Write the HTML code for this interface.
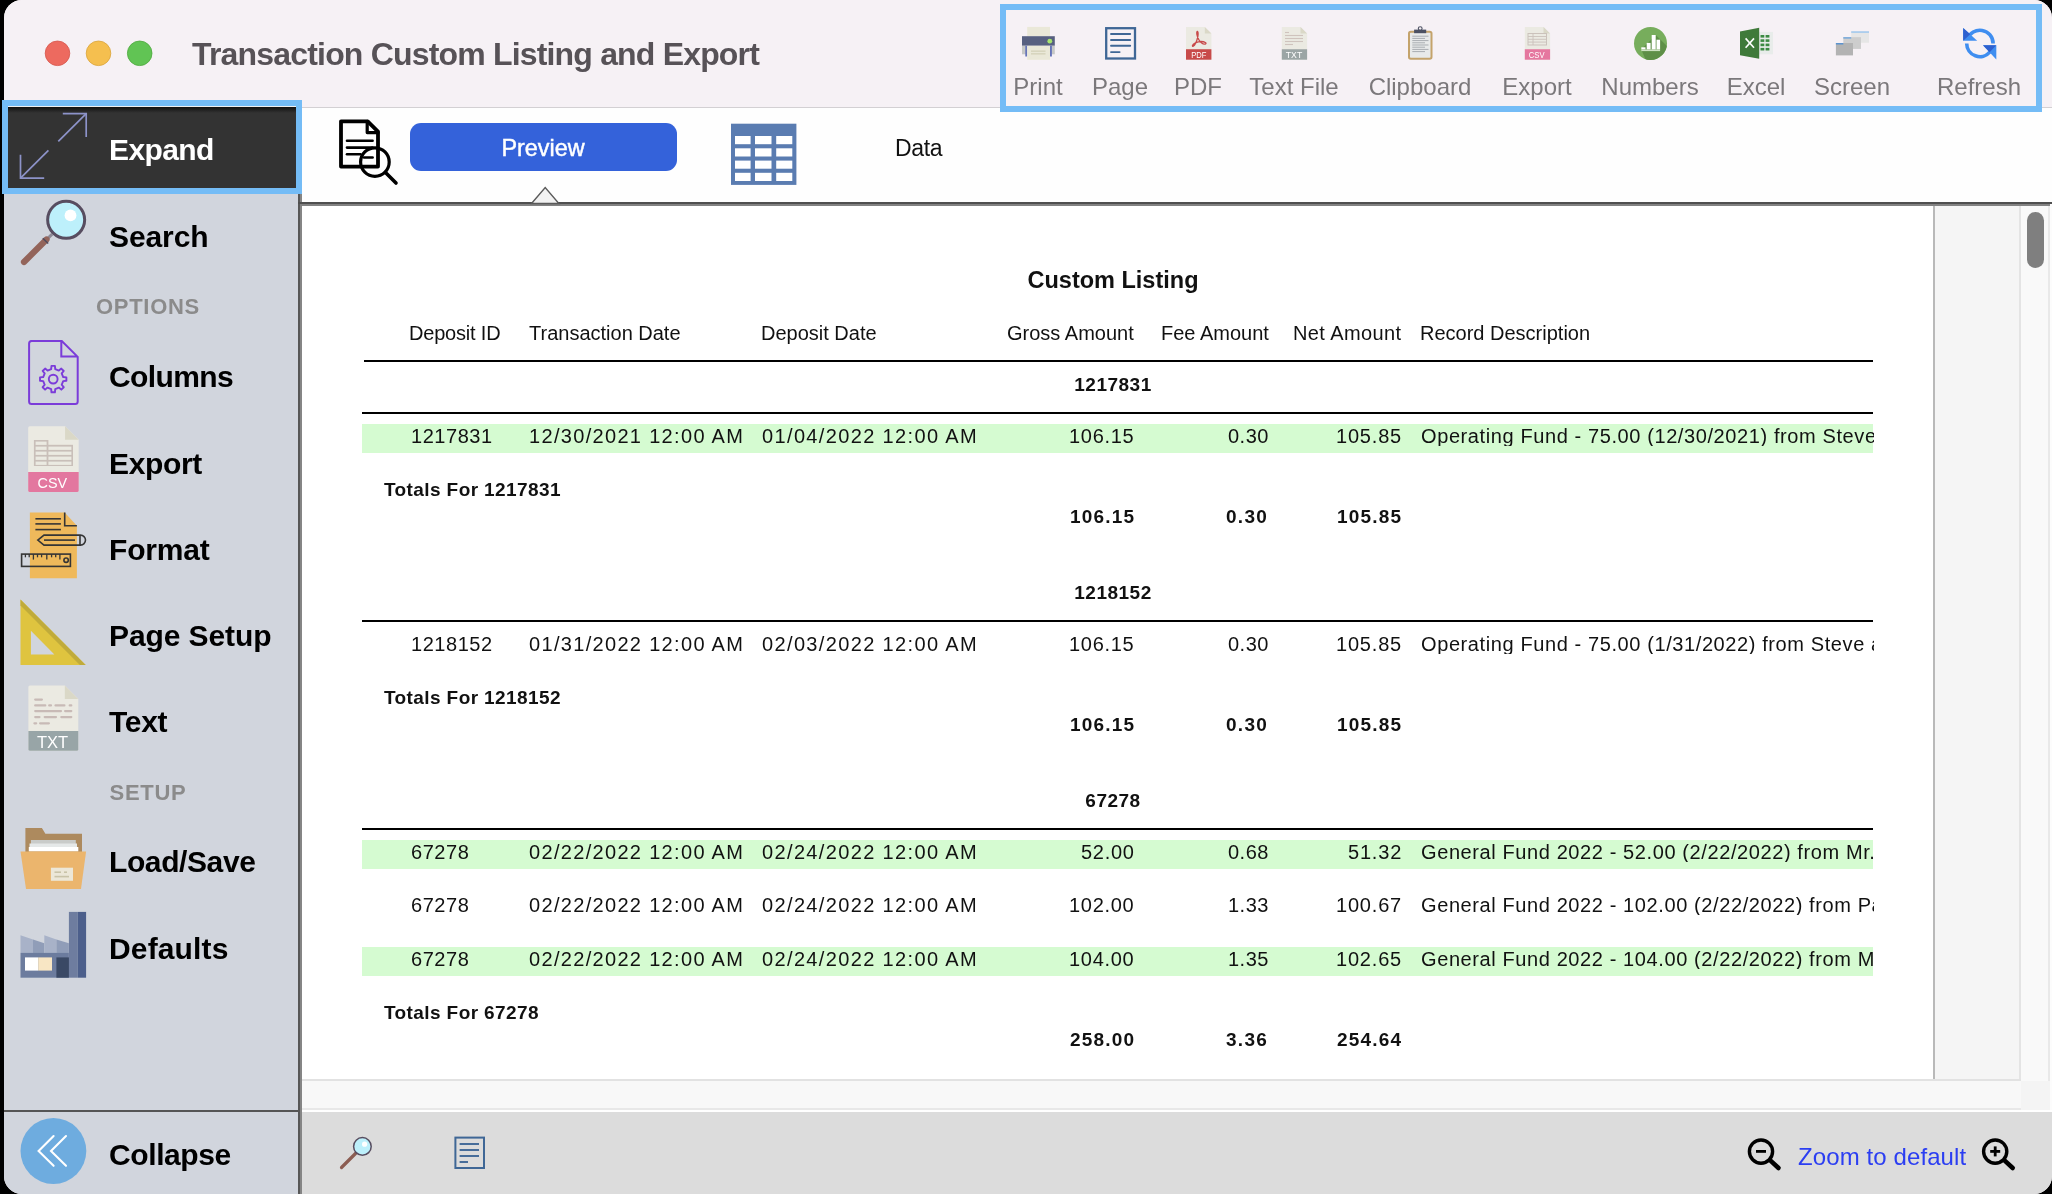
<!DOCTYPE html>
<html><head><meta charset="utf-8"><title>Transaction Custom Listing and Export</title>
<style>
html,body{margin:0;padding:0;background:#000;width:2052px;height:1194px;overflow:hidden}
#win{position:absolute;left:4px;top:0;width:2048px;height:1194px;border-radius:18px;overflow:hidden;background:#f6f1f5}
#inner{position:absolute;left:-4px;top:0;width:2052px;height:1194px}
.t{position:absolute;line-height:1;white-space:nowrap;font-family:"Liberation Sans",sans-serif;-webkit-font-smoothing:antialiased;will-change:transform}
.r{position:absolute;box-sizing:content-box}
svg.r{overflow:visible}
</style></head><body>
<div id="win"><div id="inner">
<div class="r" style="left:4px;top:0px;width:2048px;height:107px;background:#f6f1f5;"></div>
<div class="r" style="left:4px;top:107px;width:2048px;height:1px;background:#d3d0d3;"></div>
<div class="r" style="left:302px;top:108px;width:1750px;height:94px;background:#fefefe;"></div>
<div class="r" style="left:4px;top:108px;width:294px;height:1086px;background:#d1d5dd;"></div>
<div class="r" style="left:298px;top:193px;width:2px;height:1001px;background:#575757;"></div>
<div class="r" style="left:300px;top:193px;width:2px;height:1001px;background:#858585;"></div>
<div class="r" style="left:4px;top:1110px;width:294px;height:2px;background:#555;"></div>
<div class="r" style="left:298px;top:202px;width:1754px;height:2px;background:#4f4f4f;"></div>
<div class="r" style="left:300px;top:204px;width:1750px;height:2px;background:#828282;"></div>
<div class="r" style="left:302px;top:206px;width:1632px;height:873px;background:#ffffff;"></div>
<div class="r" style="left:1933px;top:206px;width:2px;height:873px;background:#b9b9b9;"></div>
<div class="r" style="left:1935px;top:206px;width:84px;height:873px;background:#f5f5f5;"></div>
<div class="r" style="left:2019px;top:206px;width:1.5px;height:873px;background:#e4e4e4;"></div>
<div class="r" style="left:2020.5px;top:206px;width:27.5px;height:875px;background:#f9f9f9;"></div>
<div class="r" style="left:2048px;top:206px;width:2px;height:875px;background:#e9e9e9;"></div>
<div class="r" style="left:2050px;top:204px;width:2px;height:877px;background:#fcfcfc;"></div>
<div class="r" style="left:2027px;top:212px;width:17px;height:56px;background:#7f7f7f;border-radius:8.5px"></div>
<div class="r" style="left:302px;top:1079px;width:1718.5px;height:2px;background:#e2e2e2;"></div>
<div class="r" style="left:302px;top:1081px;width:1719px;height:28px;background:#f8f8f8;"></div>
<div class="r" style="left:302px;top:1108px;width:1719px;height:1.5px;background:#e8e8e8;"></div>
<div class="r" style="left:2021px;top:1081px;width:29px;height:29px;background:#f4f4f4;"></div>
<div class="r" style="left:2050px;top:1081px;width:2px;height:29px;background:#fcfcfc;"></div>
<div class="r" style="left:302px;top:1109.5px;width:1750px;height:2.5px;background:#ffffff;"></div>
<div class="r" style="left:302px;top:1112px;width:1750px;height:82px;background:#dcdcdc;"></div>
<svg class="r" style="left:0;top:0" width="200" height="100">
<circle cx="57.5" cy="53.3" r="12.3" fill="#ed6a5f" stroke="#d5574c" stroke-width="0.8"/>
<circle cx="98.5" cy="53.3" r="12.3" fill="#f5bf4f" stroke="#d9a53c" stroke-width="0.8"/>
<circle cx="139.7" cy="53.3" r="12.3" fill="#61c454" stroke="#4ea83f" stroke-width="0.8"/>
</svg>
<div class="t" style="left:192.4px;top:37.7px;font-size:32px;font-weight:bold;color:#575257;letter-spacing:-0.82px;">Transaction Custom Listing and Export</div>
<div class="r" style="left:1000px;top:4px;width:1030px;height:96px;border:6px solid #74bcf6"></div>
<div class="t" style="left:538.3px;width:1000px;text-align:center;top:75.0px;font-size:24px;font-weight:normal;color:#7b787b;letter-spacing:0px;">Print</div>
<div class="t" style="left:619.7px;width:1000px;text-align:center;top:75.0px;font-size:24px;font-weight:normal;color:#7b787b;letter-spacing:0px;">Page</div>
<div class="t" style="left:698.2px;width:1000px;text-align:center;top:75.0px;font-size:24px;font-weight:normal;color:#7b787b;letter-spacing:0px;">PDF</div>
<div class="t" style="left:794.0px;width:1000px;text-align:center;top:75.0px;font-size:24px;font-weight:normal;color:#7b787b;letter-spacing:0px;">Text File</div>
<div class="t" style="left:919.9px;width:1000px;text-align:center;top:75.0px;font-size:24px;font-weight:normal;color:#7b787b;letter-spacing:0px;">Clipboard</div>
<div class="t" style="left:1036.8px;width:1000px;text-align:center;top:75.0px;font-size:24px;font-weight:normal;color:#7b787b;letter-spacing:0px;">Export</div>
<div class="t" style="left:1150.0px;width:1000px;text-align:center;top:75.0px;font-size:24px;font-weight:normal;color:#7b787b;letter-spacing:0px;">Numbers</div>
<div class="t" style="left:1256.4px;width:1000px;text-align:center;top:75.0px;font-size:24px;font-weight:normal;color:#7b787b;letter-spacing:0px;">Excel</div>
<div class="t" style="left:1352.0px;width:1000px;text-align:center;top:75.0px;font-size:24px;font-weight:normal;color:#7b787b;letter-spacing:0px;">Screen</div>
<div class="t" style="left:1479.3px;width:1000px;text-align:center;top:75.0px;font-size:24px;font-weight:normal;color:#7b787b;letter-spacing:0px;">Refresh</div>
<div class="r" style="left:8px;top:100px;width:288px;height:88px;background:#333;"></div>
<div class="r" style="left:8px;top:106px;width:288px;height:1px;background:#f0f0f0;"></div>
<div class="r" style="left:8px;top:107px;width:288px;height:6px;background:linear-gradient(#111,#333);"></div>
<div class="t" style="left:109.2px;top:135.4px;font-size:30px;font-weight:bold;color:#fff;letter-spacing:-0.6px;">Expand</div>
<div class="t" style="left:109.2px;top:222.1px;font-size:30px;font-weight:bold;color:#000;letter-spacing:-0.1px;">Search</div>
<div class="t" style="left:109.2px;top:361.8px;font-size:30px;font-weight:bold;color:#000;letter-spacing:-0.6px;">Columns</div>
<div class="t" style="left:109.2px;top:448.6px;font-size:30px;font-weight:bold;color:#000;letter-spacing:-0.35px;">Export</div>
<div class="t" style="left:109.2px;top:534.9px;font-size:30px;font-weight:bold;color:#000;letter-spacing:-0.2px;">Format</div>
<div class="t" style="left:109.2px;top:621.1px;font-size:30px;font-weight:bold;color:#000;letter-spacing:-0.1px;">Page Setup</div>
<div class="t" style="left:109.2px;top:707.4px;font-size:30px;font-weight:bold;color:#000;letter-spacing:-0.3px;">Text</div>
<div class="t" style="left:109.2px;top:846.8px;font-size:30px;font-weight:bold;color:#000;letter-spacing:-0.4px;">Load/Save</div>
<div class="t" style="left:109.2px;top:933.6px;font-size:30px;font-weight:bold;color:#000;letter-spacing:0.15px;">Defaults</div>
<div class="t" style="left:109.2px;top:1139.6px;font-size:30px;font-weight:bold;color:#000;letter-spacing:-0.4px;">Collapse</div>
<div class="t" style="left:-352.3px;width:1000px;text-align:center;top:296.3px;font-size:22px;font-weight:bold;color:#8b8b8b;letter-spacing:0.7px;">OPTIONS</div>
<div class="t" style="left:-352.3px;width:1000px;text-align:center;top:781.8px;font-size:22px;font-weight:bold;color:#8b8b8b;letter-spacing:0.7px;">SETUP</div>
<div class="r" style="left:409.6px;top:123.3px;width:267.3px;height:47.5px;background:#3462da;border-radius:11px"></div>
<div class="t" style="left:42.6px;width:1000px;text-align:center;top:137.0px;font-size:23.4px;font-weight:normal;color:#fff;letter-spacing:0px;-webkit-text-stroke:0.45px #fff;">Preview</div>
<div class="t" style="left:895.3px;top:137.3px;font-size:23px;font-weight:normal;color:#111;letter-spacing:-0.35px;">Data</div>
<div class="t" style="left:613.3px;width:1000px;text-align:center;top:268.6px;font-size:23.5px;font-weight:bold;color:#111;letter-spacing:0px;">Custom Listing</div>
<div class="t" style="left:408.5px;top:323.1px;font-size:20px;font-weight:normal;color:#111;letter-spacing:-0.2px;">Deposit ID</div>
<div class="t" style="left:529.2px;top:323.1px;font-size:20px;font-weight:normal;color:#111;letter-spacing:0px;">Transaction Date</div>
<div class="t" style="left:761.4px;top:323.1px;font-size:20px;font-weight:normal;color:#111;letter-spacing:0px;">Deposit Date</div>
<div class="t" style="left:1006.7px;top:323.1px;font-size:20px;font-weight:normal;color:#111;letter-spacing:0px;">Gross Amount</div>
<div class="t" style="left:1161.3px;top:323.1px;font-size:20px;font-weight:normal;color:#111;letter-spacing:0px;">Fee Amount</div>
<div class="t" style="left:1292.7px;top:323.1px;font-size:20px;font-weight:normal;color:#111;letter-spacing:0.4px;">Net Amount</div>
<div class="t" style="left:1419.8px;top:323.1px;font-size:20px;font-weight:normal;color:#111;letter-spacing:0px;">Record Description</div>
<div class="r" style="left:364px;top:360px;width:1509px;height:2px;background:#000;"></div>
<div class="t" style="left:613.3px;width:1000px;text-align:center;top:374.9px;font-size:19px;font-weight:bold;color:#111;letter-spacing:0.5px;">1217831</div>
<div class="r" style="left:362px;top:412px;width:1511px;height:2px;background:#000;"></div>
<div class="r" style="left:362px;top:424px;width:1511px;height:29px;background:#d5fbd1;"></div>
<div class="t" style="left:411.0px;top:425.9px;font-size:20px;font-weight:normal;color:#111;letter-spacing:0.55px;">1217831</div>
<div class="t" style="left:529.0px;top:425.9px;font-size:20px;font-weight:normal;color:#111;letter-spacing:1.32px;">12/30/2021 12:00 AM</div>
<div class="t" style="left:761.6px;top:425.9px;font-size:20px;font-weight:normal;color:#111;letter-spacing:1.36px;">01/04/2022 12:00 AM</div>
<div class="t" style="right:917.2px;top:425.9px;font-size:20px;font-weight:normal;color:#111;letter-spacing:0.7px;">106.15</div>
<div class="t" style="right:783.0px;top:425.9px;font-size:20px;font-weight:normal;color:#111;letter-spacing:0.5px;">0.30</div>
<div class="t" style="right:649.7px;top:425.9px;font-size:20px;font-weight:normal;color:#111;letter-spacing:0.8px;">105.85</div>
<div class="t" style="left:1420.5px;top:425.9px;width:452.5px;overflow:hidden;font-size:20px;color:#111;letter-spacing:0.6px">Operating Fund - 75.00 (12/30/2021) from Steve and Mary</div>
<div class="t" style="left:383.9px;top:480.2px;font-size:19px;font-weight:bold;color:#111;letter-spacing:0.4px;">Totals For 1217831</div>
<div class="t" style="right:916.4px;top:506.7px;font-size:19px;font-weight:bold;color:#111;letter-spacing:1.2px;">106.15</div>
<div class="t" style="right:783.6px;top:506.7px;font-size:19px;font-weight:bold;color:#111;letter-spacing:1.3px;">0.30</div>
<div class="t" style="right:649.8px;top:506.7px;font-size:19px;font-weight:bold;color:#111;letter-spacing:1.2px;">105.85</div>
<div class="t" style="left:613.3px;width:1000px;text-align:center;top:582.9px;font-size:19px;font-weight:bold;color:#111;letter-spacing:0.5px;">1218152</div>
<div class="r" style="left:362px;top:620px;width:1511px;height:2px;background:#000;"></div>
<div class="t" style="left:411.0px;top:633.9px;font-size:20px;font-weight:normal;color:#111;letter-spacing:0.55px;">1218152</div>
<div class="t" style="left:529.0px;top:633.9px;font-size:20px;font-weight:normal;color:#111;letter-spacing:1.32px;">01/31/2022 12:00 AM</div>
<div class="t" style="left:761.6px;top:633.9px;font-size:20px;font-weight:normal;color:#111;letter-spacing:1.36px;">02/03/2022 12:00 AM</div>
<div class="t" style="right:917.2px;top:633.9px;font-size:20px;font-weight:normal;color:#111;letter-spacing:0.7px;">106.15</div>
<div class="t" style="right:783.0px;top:633.9px;font-size:20px;font-weight:normal;color:#111;letter-spacing:0.5px;">0.30</div>
<div class="t" style="right:649.7px;top:633.9px;font-size:20px;font-weight:normal;color:#111;letter-spacing:0.8px;">105.85</div>
<div class="t" style="left:1420.5px;top:633.9px;width:452.5px;overflow:hidden;font-size:20px;color:#111;letter-spacing:0.6px">Operating Fund - 75.00 (1/31/2022) from Steve and Mary</div>
<div class="t" style="left:383.9px;top:688.2px;font-size:19px;font-weight:bold;color:#111;letter-spacing:0.4px;">Totals For 1218152</div>
<div class="t" style="right:916.4px;top:714.7px;font-size:19px;font-weight:bold;color:#111;letter-spacing:1.2px;">106.15</div>
<div class="t" style="right:783.6px;top:714.7px;font-size:19px;font-weight:bold;color:#111;letter-spacing:1.3px;">0.30</div>
<div class="t" style="right:649.8px;top:714.7px;font-size:19px;font-weight:bold;color:#111;letter-spacing:1.2px;">105.85</div>
<div class="t" style="left:613.3px;width:1000px;text-align:center;top:790.9px;font-size:19px;font-weight:bold;color:#111;letter-spacing:0.5px;">67278</div>
<div class="r" style="left:362px;top:828px;width:1511px;height:2px;background:#000;"></div>
<div class="r" style="left:362px;top:840px;width:1511px;height:29px;background:#d5fbd1;"></div>
<div class="t" style="left:411.0px;top:841.9px;font-size:20px;font-weight:normal;color:#111;letter-spacing:0.55px;">67278</div>
<div class="t" style="left:529.0px;top:841.9px;font-size:20px;font-weight:normal;color:#111;letter-spacing:1.32px;">02/22/2022 12:00 AM</div>
<div class="t" style="left:761.6px;top:841.9px;font-size:20px;font-weight:normal;color:#111;letter-spacing:1.36px;">02/24/2022 12:00 AM</div>
<div class="t" style="right:917.2px;top:841.9px;font-size:20px;font-weight:normal;color:#111;letter-spacing:0.7px;">52.00</div>
<div class="t" style="right:783.0px;top:841.9px;font-size:20px;font-weight:normal;color:#111;letter-spacing:0.5px;">0.68</div>
<div class="t" style="right:649.7px;top:841.9px;font-size:20px;font-weight:normal;color:#111;letter-spacing:0.8px;">51.32</div>
<div class="t" style="left:1420.5px;top:841.9px;width:452.5px;overflow:hidden;font-size:20px;color:#111;letter-spacing:0.6px">General Fund 2022 - 52.00 (2/22/2022) from Mr. and Mrs.</div>
<div class="t" style="left:411.0px;top:895.4px;font-size:20px;font-weight:normal;color:#111;letter-spacing:0.55px;">67278</div>
<div class="t" style="left:529.0px;top:895.4px;font-size:20px;font-weight:normal;color:#111;letter-spacing:1.32px;">02/22/2022 12:00 AM</div>
<div class="t" style="left:761.6px;top:895.4px;font-size:20px;font-weight:normal;color:#111;letter-spacing:1.36px;">02/24/2022 12:00 AM</div>
<div class="t" style="right:917.2px;top:895.4px;font-size:20px;font-weight:normal;color:#111;letter-spacing:0.7px;">102.00</div>
<div class="t" style="right:783.0px;top:895.4px;font-size:20px;font-weight:normal;color:#111;letter-spacing:0.5px;">1.33</div>
<div class="t" style="right:649.7px;top:895.4px;font-size:20px;font-weight:normal;color:#111;letter-spacing:0.8px;">100.67</div>
<div class="t" style="left:1420.5px;top:895.4px;width:452.5px;overflow:hidden;font-size:20px;color:#111;letter-spacing:0.6px">General Fund 2022 - 102.00 (2/22/2022) from Paul</div>
<div class="r" style="left:362px;top:947px;width:1511px;height:29px;background:#d5fbd1;"></div>
<div class="t" style="left:411.0px;top:948.9px;font-size:20px;font-weight:normal;color:#111;letter-spacing:0.55px;">67278</div>
<div class="t" style="left:529.0px;top:948.9px;font-size:20px;font-weight:normal;color:#111;letter-spacing:1.32px;">02/22/2022 12:00 AM</div>
<div class="t" style="left:761.6px;top:948.9px;font-size:20px;font-weight:normal;color:#111;letter-spacing:1.36px;">02/24/2022 12:00 AM</div>
<div class="t" style="right:917.2px;top:948.9px;font-size:20px;font-weight:normal;color:#111;letter-spacing:0.7px;">104.00</div>
<div class="t" style="right:783.0px;top:948.9px;font-size:20px;font-weight:normal;color:#111;letter-spacing:0.5px;">1.35</div>
<div class="t" style="right:649.7px;top:948.9px;font-size:20px;font-weight:normal;color:#111;letter-spacing:0.8px;">102.65</div>
<div class="t" style="left:1420.5px;top:948.9px;width:452.5px;overflow:hidden;font-size:20px;color:#111;letter-spacing:0.6px">General Fund 2022 - 104.00 (2/22/2022) from Mark</div>
<div class="t" style="left:383.9px;top:1003.2px;font-size:19px;font-weight:bold;color:#111;letter-spacing:0.4px;">Totals For 67278</div>
<div class="t" style="right:916.4px;top:1029.7px;font-size:19px;font-weight:bold;color:#111;letter-spacing:1.2px;">258.00</div>
<div class="t" style="right:783.6px;top:1029.7px;font-size:19px;font-weight:bold;color:#111;letter-spacing:1.3px;">3.36</div>
<div class="t" style="right:649.8px;top:1029.7px;font-size:19px;font-weight:bold;color:#111;letter-spacing:1.2px;">254.64</div>
<div class="t" style="left:1798.4px;top:1144.6px;font-size:24px;font-weight:normal;color:#2b3ef2;letter-spacing:0.1px;">Zoom to default</div>
<svg style="position:absolute;left:0;top:0" width="2052" height="1194"><g stroke="#8d93c9" stroke-width="1.7" fill="none" stroke-linecap="butt"><polyline points="20.5,154.8 20.5,178.2 44.2,178.2"/><line x1="20.5" y1="178.2" x2="48.4" y2="150.4"/><polyline points="62.8,113.6 86.2,113.6 86.2,137"/><line x1="86.2" y1="113.6" x2="58.3" y2="141.4"/></g><line x1="47.5" y1="238.6" x2="52.2" y2="234.2" stroke="#8e8a96" stroke-width="3"/><line x1="24" y1="262" x2="46.5" y2="239.5" stroke="#93645a" stroke-width="6.2" stroke-linecap="round"/><line x1="42.8" y1="238.2" x2="48.2" y2="243.6" stroke="#4f4a5c" stroke-width="1.4"/><circle cx="66.15" cy="219.8" r="18.5" fill="#bdf0fb" stroke="#574d60" stroke-width="3"/><circle cx="70.5" cy="215.4" r="5.9" fill="#fff"/><path d="M30.5,341 H61.8 L77.7,356.9 V401.5 Q77.7,404 75.2,404 H31.6 Q29.1,404 29.1,401.5 V343.5 Q29.1,341 31.6,341 Z M61.3,341 V356.4 H77.7" fill="none" stroke="#7b3cd9" stroke-width="2"/><polygon points="63.20,377.07 66.39,377.38 66.39,380.82 63.20,381.13 61.70,384.74 63.74,387.21 61.31,389.64 58.84,387.60 55.23,389.10 54.92,392.29 51.48,392.29 51.17,389.10 47.56,387.60 45.09,389.64 42.66,387.21 44.70,384.74 43.20,381.13 40.01,380.82 40.01,377.38 43.20,377.07 44.70,373.46 42.66,370.99 45.09,368.56 47.56,370.60 51.17,369.10 51.48,365.91 54.92,365.91 55.23,369.10 58.84,370.60 61.31,368.56 63.74,370.99 61.70,373.46" fill="none" stroke="#7b3cd9" stroke-width="1.9" stroke-linejoin="round"/><circle cx="53.2" cy="379.1" r="4.4" fill="none" stroke="#7b3cd9" stroke-width="1.9"/><path d="M29.7,426.2 H65.065 L78.7,439.835 V490.5 Q78.7,492.0 77.2,492.0 H29.7 Q28.2,492.0 28.2,490.5 V427.7 Q28.2,426.2 29.7,426.2 Z" fill="#ebeae2"/><path d="M65.065,426.2 L78.7,439.835 H65.065 Z" fill="#dad8c7"/><path d="M28.2,471.931 H78.7 V490.5 Q78.7,492.0 77.2,492.0 H29.7 Q28.2,492.0 28.2,490.5 Z" fill="#e3779f"/><text x="37.6" y="488.1" font-family="Liberation Sans, sans-serif" font-size="15.5" fill="#fff" textLength="29.6" lengthAdjust="spacingAndGlyphs">CSV</text><g fill="#c9bfb9"><rect x="33.9" y="440" width="39.1" height="26"/></g><g fill="#ebeae2"><rect x="35.6" y="441.6" width="11" height="3.3"/><rect x="35.6" y="446.6" width="11" height="3.3"/><rect x="35.6" y="451.6" width="11" height="3.3"/><rect x="35.6" y="456.6" width="11" height="3.3"/><rect x="35.6" y="461.6" width="11" height="3.3"/><rect x="48.4" y="446.6" width="23" height="3.3"/><rect x="48.4" y="451.6" width="23" height="3.3"/><rect x="48.4" y="456.6" width="23" height="3.3"/><rect x="48.4" y="461.6" width="23" height="3.3"/></g><rect x="48.4" y="440" width="24.6" height="4.8" fill="#ebeae2"/><path d="M29.9,512.6 H64.7 L76.9,525.7 V578.2 H29.9 Z" fill="#efb95b"/><g stroke="#353535" stroke-width="1.6" fill="none"><polyline points="64.7,512.6 64.7,525.7 76.9,525.7"/><line x1="35.4" y1="518.8" x2="60.9" y2="518.8"/><line x1="35.4" y1="523.9" x2="60.9" y2="523.9"/><line x1="35.4" y1="529.6" x2="60.9" y2="529.6"/><path d="M37.8,540.1 L44,535.1 H80.5 A5,5 0 0 1 80.5,545.1 H44 Z"/><line x1="80" y1="535.1" x2="80" y2="545.1"/><line x1="44" y1="540.1" x2="75" y2="540.1"/><rect x="21.6" y="554.1" width="48.8" height="12.3" fill="none"/><circle cx="66.1" cy="560.2" r="2.2"/></g><g stroke="#353535" stroke-width="1.3"><line x1="25.4" y1="554.1" x2="25.4" y2="557.3000000000001"/><line x1="29.2" y1="554.1" x2="29.2" y2="557.3000000000001"/><line x1="33.4" y1="554.1" x2="33.4" y2="559.6"/><line x1="37.5" y1="554.1" x2="37.5" y2="557.3000000000001"/><line x1="41.6" y1="554.1" x2="41.6" y2="557.3000000000001"/><line x1="46.8" y1="554.1" x2="46.8" y2="559.6"/><line x1="51.6" y1="554.1" x2="51.6" y2="557.3000000000001"/><line x1="55.7" y1="554.1" x2="55.7" y2="557.3000000000001"/><line x1="59.9" y1="554.1" x2="59.9" y2="559.6"/></g><path d="M20.5,599.6 L85.7,665 H20.5 Z M30.9,630.7 V654.6 H54.4 Z" fill="#dfc43f" fill-rule="evenodd"/><path d="M20.5,599.6 L85.7,665 H79.9 L20.5,605.4 Z" fill="#c0ab3a"/><path d="M29.9,685.5 H64.827 L78.3,698.973 V749.3 Q78.3,750.8 76.8,750.8 H29.9 Q28.4,750.8 28.4,749.3 V687.0 Q28.4,685.5 29.9,685.5 Z" fill="#ebeae2"/><path d="M64.827,685.5 L78.3,698.973 H64.827 Z" fill="#dad8c7"/><path d="M28.4,730.8834999999999 H78.3 V749.3 Q78.3,750.8 76.8,750.8 H29.9 Q28.4,750.8 28.4,749.3 Z" fill="#98a5a7"/><text x="37.0" y="747.8" font-family="Liberation Sans, sans-serif" font-size="17" fill="#fff" textLength="31.200000000000003" lengthAdjust="spacingAndGlyphs">TXT</text><g stroke="#c8bab6" stroke-width="2.2" stroke-linecap="round"><line x1="35.2" y1="699.6" x2="41.9" y2="699.6"/><line x1="35.2" y1="705.4" x2="45.3" y2="705.4"/><line x1="51" y1="705.4" x2="49.2" y2="705.4"/><line x1="55.5" y1="705.4" x2="64.4" y2="705.4"/><line x1="69.7" y1="705.4" x2="71.3" y2="705.4"/><line x1="35.2" y1="711.1" x2="61" y2="711.1"/><line x1="65.1" y1="711.1" x2="71.3" y2="711.1"/><line x1="35.2" y1="717.1" x2="39.5" y2="717.1"/><line x1="44.7" y1="717.1" x2="56" y2="717.1"/><line x1="61.3" y1="717.1" x2="71.3" y2="717.1"/><line x1="36.2" y1="723.3" x2="34.4" y2="723.3"/><line x1="40.1" y1="723.3" x2="48.9" y2="723.3"/></g><path d="M25.4,828 H41.9 L45.4,833.8 H82 V852 H25.4 Z" fill="#ad8a5e"/><rect x="30.9" y="840" width="44.9" height="5" fill="#c9cbc9"/><rect x="29.5" y="843.5" width="47.5" height="4.5" fill="#e5e8e8"/><rect x="28.8" y="847" width="49.5" height="4.5" fill="#fff"/><path d="M20.5,851.5 H86.1 L81,889 H26 Z" fill="#ebb56d"/><rect x="50.9" y="867.7" width="22.1" height="13.1" fill="#ece7d8"/><g stroke="#c9c3a8" stroke-width="1.6"><line x1="54.5" y1="872.2" x2="61" y2="872.2"/><line x1="64" y1="872.2" x2="67" y2="872.2"/><line x1="54.5" y1="876.6" x2="69" y2="876.6"/></g><rect x="68.9" y="911.9" width="8.9" height="65.8" fill="#6e7d9f"/><rect x="77.8" y="911.9" width="8.3" height="65.8" fill="#4c5f8b"/><path d="M20.5,935.3 L33,939.5 V952.9 H20.5 Z" fill="#a8b2c8"/><path d="M33,939.5 L44.3,943.3 V952.9 H33 Z" fill="#909db8"/><path d="M44.3,935.3 L56.4,939.5 V952.9 H44.3 Z" fill="#a8b2c8"/><path d="M56.4,939.5 L68.9,943.3 V952.9 H56.4 Z" fill="#909db8"/><rect x="20.5" y="952.9" width="48.4" height="24.8" fill="#6c7c9e"/><rect x="25" y="957.4" width="13.2" height="13.2" fill="#fff"/><rect x="38.2" y="957.4" width="13.8" height="13.2" fill="#f8e6c4"/><rect x="56.4" y="957.4" width="12.5" height="20.3" fill="#3a4965"/><circle cx="53.4" cy="1151" r="32.9" fill="#6eacdf"/><g stroke="#fff" stroke-width="2.1" fill="none" stroke-linecap="round"><polyline points="53.6,1136 38.6,1150.9 53.6,1165.8"/><polyline points="66,1136 51,1150.9 66,1165.8"/></g><g stroke="#000" fill="none" stroke-linecap="round" stroke-linejoin="round"><path d="M341,121.3 H367.7 L378,131.6 V166.6 H341 Z" stroke-width="3.8"/><polyline points="367.2,121.3 367.2,132.6 378,132.6" stroke-width="3.2"/><line x1="347" y1="140.8" x2="372.6" y2="140.8" stroke-width="2.6"/><line x1="347" y1="147.6" x2="372.6" y2="147.6" stroke-width="2.6"/><line x1="347" y1="154.2" x2="360.5" y2="154.2" stroke-width="2.6"/><line x1="364" y1="157.5" x2="372.6" y2="157.5" stroke-width="2.6"/><circle cx="374.9" cy="162.1" r="14.3" stroke-width="3.2"/><line x1="385.5" y1="172.4" x2="396" y2="183" stroke-width="3.6"/></g><path d="M531.5,203.5 L545.2,187.6 L558.9,203.5 Z" fill="#f2f2f2" stroke="#5a5a5a" stroke-width="1.4"/><rect x="731" y="123.7" width="65.4" height="61.2" fill="#5a7cb1"/><g fill="#fff"><rect x="735" y="136" width="15.6" height="8.2"/><rect x="735" y="148.3" width="15.6" height="8.2"/><rect x="735" y="160.6" width="15.6" height="8.1"/><rect x="735" y="172.8" width="15.6" height="8.2"/><rect x="755" y="136" width="16.5" height="8.2"/><rect x="755" y="148.3" width="16.5" height="8.2"/><rect x="755" y="160.6" width="16.5" height="8.1"/><rect x="755" y="172.8" width="16.5" height="8.2"/><rect x="776.2" y="136" width="16.1" height="8.2"/><rect x="776.2" y="148.3" width="16.1" height="8.2"/><rect x="776.2" y="160.6" width="16.1" height="8.1"/><rect x="776.2" y="172.8" width="16.1" height="8.2"/></g><rect x="1027.2" y="26.9" width="22.8" height="9.5" fill="#eae8d8"/><rect x="1022" y="36.2" width="32.8" height="9.6" fill="#576080"/><circle cx="1049.8" cy="41.2" r="2.4" fill="#a6e36f"/><rect x="1022" y="45.7" width="5" height="8.6" fill="#c6c8c6"/><rect x="1049.8" y="45.7" width="5" height="8.6" fill="#c6c8c6"/><rect x="1025.3" y="45.7" width="1.9" height="10.8" fill="#6674b8"/><rect x="1050" y="45.7" width="1.9" height="10.8" fill="#6674b8"/><rect x="1027.2" y="45.7" width="22.8" height="14.1" fill="#eae8d8"/><rect x="1031" y="50.5" width="14.5" height="1.3" fill="#d3d0b7"/><rect x="1031" y="53.2" width="14.5" height="1.3" fill="#d3d0b7"/><rect x="1106.2" y="28.2" width="28.8" height="30.3" fill="none" stroke="#3f6796" stroke-width="2.3"/><g stroke="#3f6796" stroke-width="1.9" stroke-linecap="round"><line x1="1111" y1="34" x2="1130.2" y2="34"/><line x1="1111" y1="40" x2="1130.2" y2="40"/><line x1="1111" y1="45.8" x2="1130.2" y2="45.8"/><line x1="1111" y1="52.1" x2="1119.6" y2="52.1"/></g><path d="M1186,27 H1204.796 L1211.4,33.604 V59.7 H1186 Z" fill="#ebeae2"/><path d="M1204.796,27 L1211.4,33.604 H1204.796 Z" fill="#dad8c7"/><rect x="1186" y="49.236000000000004" width="25.4" height="10.464" fill="#c84a4a"/><text x="1191.3" y="57.9" font-family="Liberation Sans, sans-serif" font-size="9" font-weight="normal" fill="#fff" textLength="15.2" lengthAdjust="spacingAndGlyphs">PDF</text><path d="M1197.5,31.5 C1196,31.5 1197,37 1199,40 C1200.5,42.5 1203,44.5 1205.5,44 C1207,43.5 1205,41.5 1201,41.5 C1197,41.5 1193,44 1192.5,45.5 C1192,47 1194,46.5 1195.5,43.5 C1197.5,39.5 1199,33 1197.5,31.5 Z" fill="none" stroke="#c84a4a" stroke-width="1.3"/><path d="M1281.8,27 H1300.522 L1307.1,33.578 V59.7 H1281.8 Z" fill="#ebeae2"/><path d="M1300.522,27 L1307.1,33.578 H1300.522 Z" fill="#dad8c7"/><rect x="1281.8" y="49.236000000000004" width="25.3" height="10.464" fill="#9ba5a5"/><text x="1285.8" y="58" font-family="Liberation Sans, sans-serif" font-size="9.5" font-weight="normal" fill="#fff" textLength="16.4" lengthAdjust="spacingAndGlyphs">TXT</text><g stroke="#cfc3bd" stroke-width="1.1"><line x1="1285" y1="32.5" x2="1289" y2="32.5"/><line x1="1285" y1="35.5" x2="1303" y2="35.5"/><line x1="1285" y1="38.5" x2="1303" y2="38.5"/><line x1="1285" y1="41.5" x2="1303" y2="41.5"/><line x1="1285" y1="44.5" x2="1293" y2="44.5"/></g><rect x="1409" y="31.8" width="22.5" height="27" rx="1.8" fill="#e8eaea" stroke="#c4a36b" stroke-width="2"/><rect x="1414.1" y="29.6" width="12.1" height="3.6" fill="#4c5162"/><circle cx="1420.2" cy="28.6" r="1.9" fill="none" stroke="#4c5162" stroke-width="1.1"/><g stroke="#a8adb1" stroke-width="1"><line x1="1412.3" y1="36.2" x2="1428.5" y2="36.2"/><line x1="1412.3" y1="38.4" x2="1425" y2="38.4"/><line x1="1412.3" y1="40.6" x2="1428.5" y2="40.6"/><line x1="1412.3" y1="42.8" x2="1425" y2="42.8"/><line x1="1412.3" y1="45" x2="1428.5" y2="45"/><line x1="1412.3" y1="47.2" x2="1425" y2="47.2"/><line x1="1412.3" y1="49.4" x2="1428.5" y2="49.4"/><line x1="1412.3" y1="51.6" x2="1425" y2="51.6"/></g><path d="M1524.8,27 H1543.522 L1550.1,33.578 V59.7 H1524.8 Z" fill="#ebeae2"/><path d="M1543.522,27 L1550.1,33.578 H1543.522 Z" fill="#dad8c7"/><rect x="1524.8" y="49.236000000000004" width="25.3" height="10.464" fill="#e5779f"/><text x="1528.8" y="58" font-family="Liberation Sans, sans-serif" font-size="9" font-weight="normal" fill="#fff" textLength="15.7" lengthAdjust="spacingAndGlyphs">CSV</text><rect x="1528" y="33.5" width="18.5" height="11.5" fill="none" stroke="#cbc2bb" stroke-width="1"/><g stroke="#cbc2bb" stroke-width="0.9"><line x1="1528" y1="36.5" x2="1546.5" y2="36.5"/><line x1="1528" y1="39.3" x2="1546.5" y2="39.3"/><line x1="1528" y1="42.1" x2="1546.5" y2="42.1"/><line x1="1533" y1="33.5" x2="1533" y2="45"/></g><defs><clipPath id="numc"><circle cx="1650.5" cy="43.4" r="16.5"/></clipPath></defs><circle cx="1650.5" cy="43.4" r="16.5" fill="#77ad5c"/><path d="M1641.3,49.5 L1655.7,35 L1670,49 L1670,70 L1650,70 Z" fill="#5e8f47" clip-path="url(#numc)"/><rect x="1641.3" y="47.3" width="4.2" height="2.2" fill="#fff"/><rect x="1646.7" y="42.9" width="3.9" height="6.6" fill="#fff"/><rect x="1651.7" y="35" width="4" height="14.5" fill="#fff"/><rect x="1656.5" y="39.7" width="3.6" height="9.8" fill="#fff"/><rect x="1641.3" y="49.5" width="18.8" height="1.6" fill="#cfe3c3"/><rect x="1757" y="31.9" width="16" height="22.4" fill="#e8ecea"/><g fill="#3c8a43"><rect x="1760.5" y="35" width="3.8" height="2.6"/><rect x="1765.6" y="35" width="3.8" height="2.6"/><rect x="1760.5" y="39.3" width="3.8" height="2.6"/><rect x="1765.6" y="39.3" width="3.8" height="2.6"/><rect x="1760.5" y="43.6" width="3.8" height="2.6"/><rect x="1765.6" y="43.6" width="3.8" height="2.6"/><rect x="1760.5" y="47.9" width="3.8" height="2.6"/><rect x="1765.6" y="47.9" width="3.8" height="2.6"/></g><path d="M1740,31.6 L1759.2,27.7 V58.7 L1740,55.3 Z" fill="#3f7a3a"/><g stroke="#fff" stroke-width="1.6"><line x1="1745.6" y1="38.4" x2="1754" y2="47.8"/><line x1="1754" y1="38.4" x2="1745.6" y2="47.8"/></g><rect x="1851.2" y="31.4" width="17.8" height="11.4" fill="#e6e6e6"/><rect x="1851.2" y="31.4" width="17.8" height="1.3" fill="#93c2ee"/><rect x="1843.3" y="37.2" width="17.7" height="11.7" fill="#cdcdcd"/><rect x="1843.3" y="37.2" width="7.9" height="1.4" fill="#6fa6dc"/><rect x="1835.9" y="43" width="17.1" height="12.4" fill="#b3b3b3"/><rect x="1835.9" y="43" width="7.4" height="1.5" fill="#5b93cf"/><g fill="none" stroke="#3f8ef0" stroke-width="3.6"><path d="M1967.5,38.9 A13.2,13.2 0 0 1 1993.1,43.4"/><path d="M1966.7,43.4 A13.2,13.2 0 0 0 1990,51.9"/></g><path d="M1963.2,27.9 L1963.2,40.7 L1977.2,40.7 Z" fill="#3f8ef0"/><path d="M1963.2,27.9 L1970.2,34.3 L1963.2,40.7 Z" fill="#2e60cf"/><path d="M1983,45.2 L1996.3,45.2 L1996.3,59.4 Z" fill="#3f8ef0"/><path d="M1983,45.2 L1996.3,45.2 L1989.6,52.3 Z" fill="#2e60cf"/><line x1="341.5" y1="1167.5" x2="356" y2="1153" stroke="#8c5d52" stroke-width="3.2" stroke-linecap="round"/><circle cx="362.4" cy="1146.4" r="8.8" fill="#bdf0fb" stroke="#574d60" stroke-width="1.5"/><circle cx="364.6" cy="1144.2" r="2.6" fill="#fff"/><rect x="455.4" y="1137.6" width="28.6" height="30.4" fill="none" stroke="#3f6796" stroke-width="2"/><g stroke="#3f6796" stroke-width="1.9"><line x1="459.6" y1="1144" x2="479" y2="1144"/><line x1="459.6" y1="1150" x2="479" y2="1150"/><line x1="459.6" y1="1156" x2="479" y2="1156"/><line x1="459.6" y1="1162" x2="468" y2="1162"/></g><g stroke="#000" fill="none" stroke-linecap="round"><circle cx="1761" cy="1151.6" r="11.6" stroke-width="3.4"/><line x1="1770.5" y1="1160.6" x2="1778.5" y2="1168" stroke-width="4.6"/><line x1="1756" y1="1151.4" x2="1766" y2="1151.4" stroke-width="2.8" stroke-linecap="butt"/></g><g stroke="#000" fill="none" stroke-linecap="round"><circle cx="1995.2" cy="1151.6" r="11.6" stroke-width="3.4"/><line x1="2004.7" y1="1160.6" x2="2012.7" y2="1168" stroke-width="4.6"/><line x1="1990.2" y1="1151.4" x2="2000.2" y2="1151.4" stroke-width="2.8" stroke-linecap="butt"/><line x1="1995.2" y1="1146.4" x2="1995.2" y2="1156.4" stroke-width="2.8" stroke-linecap="butt"/></g></svg>

</div></div>
<div style="position:absolute;left:2px;top:100px;width:288px;height:81.5px;border:6px solid #74bcf6"></div>
</body></html>
